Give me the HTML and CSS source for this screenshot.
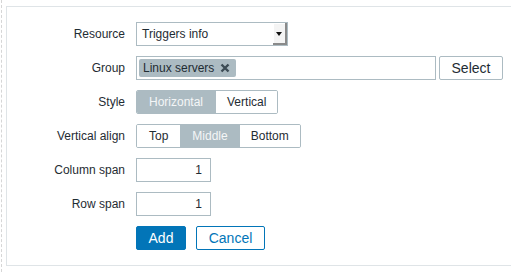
FILE: index.html
```html
<!DOCTYPE html>
<html>
<head>
<meta charset="utf-8">
<link rel="stylesheet" href="styles.css">
</head>
<body>
<div class="frame">
  <div class="panel">
    <form class="form">
      <div class="label">Resource</div>
      <div class="field">
        <div class="select">
          <span class="select-text">Triggers info</span>
          <span class="select-btn"><span class="arrow"></span></span>
        </div>
      </div>

      <div class="label">Group</div>
      <div class="field">
        <div class="multiselect">
          <span class="tag">Linux servers
            <svg class="tag-x" width="10" height="10" viewBox="0 0 10 10"><path d="M1.5 1.5 L8.5 8.5 M8.5 1.5 L1.5 8.5" stroke="#3d4c55" stroke-width="2.4" stroke-linecap="butt"/></svg>
          </span>
        </div>
        <button type="button" class="btn-alt">Select</button>
      </div>

      <div class="label">Style</div>
      <div class="field">
        <div class="segmented">
          <span class="seg checked">Horizontal</span><span class="seg">Vertical</span>
        </div>
      </div>

      <div class="label">Vertical align</div>
      <div class="field">
        <div class="segmented">
          <span class="seg">Top</span><span class="seg checked">Middle</span><span class="seg">Bottom</span>
        </div>
      </div>

      <div class="label">Column span</div>
      <div class="field">
        <div class="num">1</div>
      </div>

      <div class="label">Row span</div>
      <div class="field">
        <div class="num">1</div>
      </div>

      <div class="label"></div>
      <div class="field buttons">
        <button type="button" class="btn-primary">Add</button>
        <button type="button" class="btn-cancel">Cancel</button>
      </div>
    </form>
  </div>
</div>
</body>
</html>
```

FILE: styles.css
```css
html, body {
  margin: 0;
  padding: 0;
  background: #ffffff;
}

body {
  font-family: "Liberation Sans", Arial, sans-serif;
  font-size: 12px;
  color: #1f2c33;
}

.frame {
  margin-left: 1px;
  border-left: 1px dashed #d6d6d6;
  padding: 6px 0 0 4px;
  height: 272px;
  box-sizing: border-box;
}

.panel {
  border: 1px solid #dfe4e7;
  border-right: none;
  padding: 15px 0 15px 0;
}

.form {
  display: grid;
  grid-template-columns: 119px 1fr;
  column-gap: 10px;
  row-gap: 10px;
  margin: 0;
}

.label {
  height: 24px;
  display: flex;
  align-items: center;
  justify-content: flex-end;
  padding-right: 1px;
}

.field {
  height: 24px;
  display: flex;
  align-items: center;
}

.select {
  width: 152px;
  height: 24px;
  box-sizing: border-box;
  border: 1px solid #acbbc2;
  display: flex;
  align-items: stretch;
  background: #fff;
}

.select-text {
  flex: 1;
  display: flex;
  align-items: center;
  padding-left: 5px;
  font-size: 12px;
}

.select-btn {
  width: 13px;
  background: #f4f4f4;
  box-shadow: inset -2px -2px 0 #8a8a8a, inset 1px 1px 0 #ffffff;
  display: flex;
  align-items: center;
  justify-content: center;
  padding-right: 1px;
  padding-bottom: 1px;
}

.arrow {
  width: 0;
  height: 0;
  border-left: 3px solid transparent;
  border-right: 3px solid transparent;
  border-top: 4px solid #111;
  margin-right: 1px;
}

.multiselect {
  width: 300px;
  height: 24px;
  box-sizing: border-box;
  border: 1px solid #acbbc2;
  padding: 2px;
  display: flex;
  align-items: center;
}

.tag {
  height: 18px;
  background: #acbbc2;
  border-radius: 2px;
  display: inline-flex;
  align-items: center;
  padding: 0 6px 0 4px;
  color: #1f2c33;
  white-space: nowrap;
}

.tag-x {
  margin-left: 6px;
}

.btn-alt {
  margin-left: 3px;
  width: 64px;
  height: 24px;
  box-sizing: border-box;
  border: 1px solid #acbbc2;
  border-radius: 2px;
  background: #fff;
  color: #1f2c33;
  font-family: "Liberation Sans", Arial, sans-serif;
  font-size: 14px;
  padding: 0;
}

.segmented {
  display: flex;
  height: 24px;
  box-sizing: border-box;
  border: 1px solid #acbbc2;
  border-radius: 2px;
  overflow: hidden;
}

.seg {
  display: flex;
  align-items: center;
  padding: 0 11px;
  background: #fff;
  color: #1f2c33;
}

.seg:first-child {
  padding: 0 12px;
}

.seg + .seg {
  border-left: 1px solid #acbbc2;
}

.seg.checked {
  background: #acbbc2;
  color: #f4f6f7;
}

.num {
  width: 75px;
  height: 24px;
  box-sizing: border-box;
  border: 1px solid #acbbc2;
  display: flex;
  align-items: center;
  justify-content: flex-end;
  padding-right: 8px;
  font-size: 12px;
}

.buttons {
  gap: 10px;
}

.btn-primary {
  width: 50px;
  height: 24px;
  border: 1px solid #0275b8;
  border-radius: 2px;
  background: #0275b8;
  color: #ffffff;
  font-family: "Liberation Sans", Arial, sans-serif;
  font-size: 14px;
  padding: 0;
}

.btn-cancel {
  width: 69px;
  height: 24px;
  border: 1px solid #0275b8;
  border-radius: 2px;
  background: #ffffff;
  color: #0275b8;
  font-family: "Liberation Sans", Arial, sans-serif;
  font-size: 14px;
  padding: 0;
}
```
